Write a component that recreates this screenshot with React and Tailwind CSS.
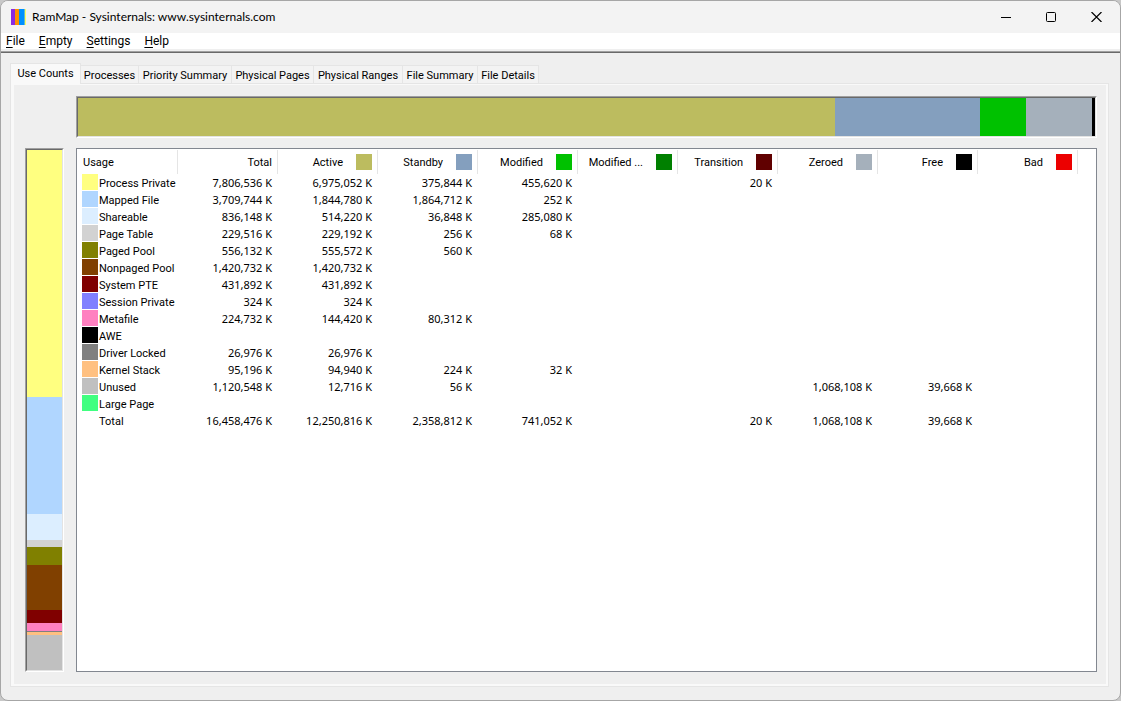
import React, { useState } from "react";

const tabs = [
  { name: "Use Counts", width: "w-[71px]" },
  { name: "Processes", width: "w-[58px]" },
  { name: "Priority Summary", width: "w-[93px]" },
  { name: "Physical Pages", width: "w-[82px]" },
  { name: "Physical Ranges", width: "w-[89px]" },
  { name: "File Summary", width: "w-[75px]" },
  { name: "File Details", width: "w-[61px]" },
];

const columns = [
  { name: "Total" },
  { name: "Active", color: "bg-[#bcbc5f]" },
  { name: "Standby", color: "bg-[#849fbe]" },
  { name: "Modified", color: "bg-[#00c100]" },
  { name: "Modified ...", color: "bg-[#008000]" },
  { name: "Transition", color: "bg-[#600000]" },
  { name: "Zeroed", color: "bg-[#a5b0bb]" },
  { name: "Free", color: "bg-black" },
  { name: "Bad", color: "bg-[#ec0000]" },
];

// values follow the order of the columns, 0 is shown as an empty cell
const rows = [
  { name: "Process Private", color: "bg-[#ffff80]", values: [7806536, 6975052, 375844, 455620, 0, 20, 0, 0, 0] },
  { name: "Mapped File", color: "bg-[#b0d6ff]", values: [3709744, 1844780, 1864712, 252, 0, 0, 0, 0, 0] },
  { name: "Shareable", color: "bg-[#dceeff]", values: [836148, 514220, 36848, 285080, 0, 0, 0, 0, 0] },
  { name: "Page Table", color: "bg-[#d2d2d2]", values: [229516, 229192, 256, 68, 0, 0, 0, 0, 0] },
  { name: "Paged Pool", color: "bg-[#808000]", values: [556132, 555572, 560, 0, 0, 0, 0, 0, 0] },
  { name: "Nonpaged Pool", color: "bg-[#804000]", values: [1420732, 1420732, 0, 0, 0, 0, 0, 0, 0] },
  { name: "System PTE", color: "bg-[#800000]", values: [431892, 431892, 0, 0, 0, 0, 0, 0, 0] },
  { name: "Session Private", color: "bg-[#8080ff]", values: [324, 324, 0, 0, 0, 0, 0, 0, 0] },
  { name: "Metafile", color: "bg-[#ff80c0]", values: [224732, 144420, 80312, 0, 0, 0, 0, 0, 0] },
  { name: "AWE", color: "bg-black", values: [0, 0, 0, 0, 0, 0, 0, 0, 0] },
  { name: "Driver Locked", color: "bg-[#808080]", values: [26976, 26976, 0, 0, 0, 0, 0, 0, 0] },
  { name: "Kernel Stack", color: "bg-[#ffc080]", values: [95196, 94940, 224, 32, 0, 0, 0, 0, 0] },
  { name: "Unused", color: "bg-[#c0c0c0]", values: [1120548, 12716, 56, 0, 0, 0, 1068108, 39668, 0] },
  { name: "Large Page", color: "bg-[#40ff80]", values: [0, 0, 0, 0, 0, 0, 0, 0, 0] },
];

const totals = [16458476, 12250816, 2358812, 741052, 0, 20, 1068108, 39668, 0];

const format = (n) => (n ? `${n.toLocaleString("en-US")} K` : "");

const TitleBar = () => (
  <header className="flex h-8 shrink-0 items-center bg-[#f3f3f3] pl-[10px]">
    <svg width="15" height="16" viewBox="0 0 15 16" aria-hidden="true">
      <rect width="4" height="16" fill="#8a2be2" />
      <rect x="4" width="4" height="16" fill="#ff9000" />
      <rect x="8" width="5" height="16" fill="#0090ff" />
      <rect x="13" width="1" height="16" fill="#62b8d0" />
      <rect x="14" width="1" height="16" fill="#ffff60" />
    </svg>
    <h1 className="ml-[6px] flex-1 font-['Lato',sans-serif] text-[12px] leading-4">
      RamMap - Sysinternals: www.sysinternals.com
    </h1>
    <button aria-label="Minimize" className="flex h-8 w-[45px] items-center justify-center">
      <svg width="10" height="10" viewBox="0 0 10 10" stroke="#000" fill="none">
        <path d="M0 5.5h10" />
      </svg>
    </button>
    <button aria-label="Maximize" className="flex h-8 w-[45px] items-center justify-center">
      <svg width="10" height="10" viewBox="0 0 10 10" stroke="#000" fill="none">
        <rect x="0.5" y="0.5" width="9" height="9" rx="1" />
      </svg>
    </button>
    <button aria-label="Close" className="flex h-8 w-[47px] items-center justify-center">
      <svg width="11" height="10" viewBox="0 0 11 10" stroke="#000" strokeWidth="1.2" fill="none">
        <path d="M0.5 0l10 10M10.5 0L0.5 10" />
      </svg>
    </button>
  </header>
);

const Menu = () => (
  <nav className="flex h-4 shrink-0 items-center gap-[14px] bg-white pl-[5px] text-[12px] leading-4">
    {["File", "Empty", "Settings", "Help"].map((item) => (
      <button key={item}>
        <span className="underline underline-offset-2">{item[0]}</span>
        {item.slice(1)}
      </button>
    ))}
  </nav>
);

const Bar = ({ parts, className }) => (
  <div className={`border border-t-[#a0a0a0] border-r-white border-b-white border-l-[#a0a0a0] ${className}`}>
    <div className="flex h-full w-full border border-t-[#696969] border-r-[#e3e3e3] border-b-[#e3e3e3] border-l-[#696969] [flex-direction:inherit]">
      {parts
        .filter((part) => part.value > totals[0] / 1000)
        .map((part) => (
          <div
            key={part.name}
            className={`min-h-px min-w-[3px] basis-0 ${part.color}`}
            style={{ flexGrow: part.value }}
          />
        ))}
    </div>
  </div>
);

const UsageTable = () => (
  <table className="w-full table-fixed border-collapse text-[11px] leading-[17px]">
    <thead>
      <tr className="h-[25px]">
        <th className="w-[101px] p-0 pt-px text-left font-normal">
          <div className="flex h-6 items-center border-r border-[#e5e5e5] pl-[6px]">Usage</div>
        </th>
        {columns.map((col) => (
          <th key={col.name} className="w-[100px] p-0 pt-px font-normal">
            <div className="flex h-6 items-center justify-end gap-[13px] border-r border-[#e5e5e5] pr-[5px]">
              {col.name}
              {col.color && <span className={`h-4 w-4 ${col.color}`} />}
            </div>
          </th>
        ))}
        <th className="p-0" />
      </tr>
    </thead>
    <tbody>
      {[...rows, { name: "Total", color: "bg-white", values: totals }].map((row) => (
        <tr key={row.name} className="h-[17px]">
          <td className="p-0">
            <div className="flex h-[17px] items-start pl-[5px]">
              <span className={`mr-px h-4 w-4 shrink-0 ${row.color}`} />
              <span className="leading-[19px] whitespace-nowrap">{row.name}</span>
            </div>
          </td>
          {row.values.map((value, i) => (
            <td key={i} className="p-0 pr-[6px] text-right font-['Noto_Sans',sans-serif] whitespace-nowrap">
              {format(value)}
            </td>
          ))}
          <td className="p-0" />
        </tr>
      ))}
    </tbody>
  </table>
);

export default function App() {
  const [active, setActive] = useState("Use Counts");

  const stateParts = columns
    .map((col, i) => ({ ...col, value: totals[i] }))
    .slice(1);
  const usageParts = rows.map((row) => ({ ...row, value: row.values[0] }));

  return (
    <div className="h-screen bg-[#c8c8c8] font-['Roboto',sans-serif] text-black">
      <div className="flex h-full flex-col overflow-hidden rounded-lg border border-[#a6a6a6] bg-[#efefef]">
        <TitleBar />
        <Menu />
        <div className="mt-[2px] h-[2px] shrink-0 border-t border-b border-t-[#a0a0a0] border-b-[#696969]" />

        <main className="mt-[10px] mr-[11px] mb-[13px] ml-[9px] flex min-h-0 flex-1 flex-col">
          <div role="tablist" className="relative z-10 -mb-px flex h-[21px] items-end text-[11px] leading-4">
            {tabs.map((tab) => (
              <button
                key={tab.name}
                role="tab"
                aria-selected={active === tab.name}
                onClick={() => setActive(tab.name)}
                className={`shrink-0 whitespace-nowrap border-t border-r border-[#e5e5e5] text-center ${tab.width} ${
                  active === tab.name
                    ? "h-[21px] border-l bg-[#f9f9f9]"
                    : "h-[19px] border-b bg-[#f3f3f3] pt-[2px]"
                }`}
              >
                {tab.name}
              </button>
            ))}
          </div>

          <div className="flex min-h-0 flex-1 border border-[#e5e5e5]">
            <div className="flex min-w-0 flex-1 flex-col gap-[10px] border-t border-r-2 border-b-2 border-l-[3px] border-[#f9f9f9] pt-[11px] pr-[9px] pb-[12px] pl-[11px]">
              <div className="flex pl-[51px]">
                <Bar parts={stateParts} className="h-[42px] flex-1 flex-row" />
              </div>
              <div className="flex min-h-0 flex-1 gap-[12px]">
                <Bar parts={usageParts} className="w-[39px] shrink-0 flex-col" />
                <div className="min-w-0 flex-1 overflow-hidden border border-[#828790] bg-white">
                  <UsageTable />
                </div>
              </div>
            </div>
          </div>
        </main>
      </div>
    </div>
  );
}
